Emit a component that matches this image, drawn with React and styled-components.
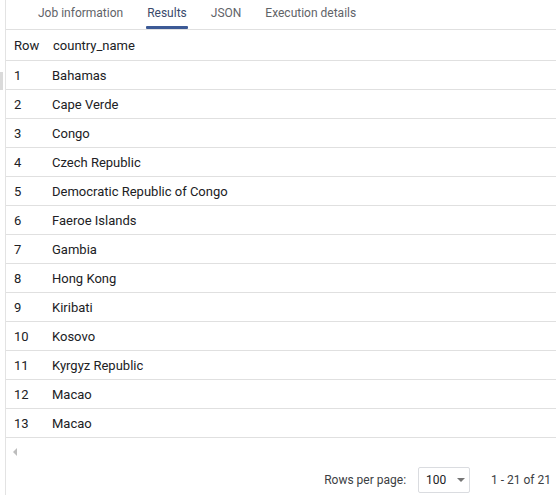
import React from "react";
import styled, { createGlobalStyle } from "styled-components";

const Global = createGlobalStyle`
  html, body { margin: 0; padding: 0; background: #fff; }
  body { font-family: Roboto, "Noto Sans", Arial, sans-serif; color: #202124; }
`;

const Page = styled.div`
  position: relative;
  width: 556px;
  height: 495px;
  overflow: hidden;
  display: flex;
  flex-direction: column;
`;

const Frame = styled.div`
  margin-left: 5px;
  border-left: 1px solid #e3e3e3;
  display: flex;
  flex-direction: column;
  flex: 1;
`;

const ScrollThumb = styled.div`
  position: absolute;
  left: 0;
  top: 72px;
  width: 3px;
  height: 18px;
  background: #dadada;
`;

const Tabs = styled.div`
  display: flex;
  height: 29px;
  padding-left: 20px;
  border-bottom: 1px solid #e0e0e0;
`;

const Tab = styled.div`
  position: relative;
  padding: 0 12px;
  font-size: 12px;
  line-height: 26px;
  color: ${(p) => (p.$active ? "#3a4a6b" : "#5f6368")};
  &::after {
    content: "";
    display: ${(p) => (p.$active ? "block" : "none")};
    position: absolute;
    left: 11px;
    right: 11px;
    bottom: 0;
    height: 3px;
    background: #3c5a96;
    border-radius: 1px;
  }
`;

const Table = styled.div`
  display: flex;
  flex-direction: column;
`;

const Row = styled.div`
  display: grid;
  grid-template-columns: 38px 1fr;
  align-items: center;
  height: ${(p) => (p.$header ? "30px" : "28px")};
  border-bottom: 1px solid #e0e0e0;
  padding-left: 8px;
  font-size: 13px;
  color: #202124;
  font-weight: 400;
`;

const NameCell = styled.div`
  padding-left: ${(p) => (p.$header ? "1px" : "0")};
`;

const HScroll = styled.div`
  height: 28px;
  display: flex;
  align-items: center;
  padding-left: 6px;
`;

const Footer = styled.div`
  display: flex;
  align-items: center;
  justify-content: flex-end;
  height: 28px;
  padding-right: 5px;
  font-size: 12px;
  color: #3c4043;
  margin-top: auto;
  margin-bottom: 2px;
`;

const Label = styled.span`
  margin-right: 12px;
`;

const Select = styled.div`
  display: flex;
  align-items: center;
  width: 52px;
  height: 26px;
  box-sizing: border-box;
  border: 1px solid #dadce0;
  border-radius: 2px;
  padding-left: 7px;
  margin-right: 21px;
  color: #202124;
`;

const Caret = styled.span`
  margin-left: 11px;
  width: 0;
  height: 0;
  border-left: 4px solid transparent;
  border-right: 4px solid transparent;
  border-top: 4px solid #757575;
`;

const rows = [
  "Bahamas",
  "Cape Verde",
  "Congo",
  "Czech Republic",
  "Democratic Republic of Congo",
  "Faeroe Islands",
  "Gambia",
  "Hong Kong",
  "Kiribati",
  "Kosovo",
  "Kyrgyz Republic",
  "Macao",
  "Macao",
];

export default function App() {
  return (
    <Page>
      <Global />
      <ScrollThumb />
      <Frame>
        <Tabs>
          <Tab>Job information</Tab>
          <Tab $active>Results</Tab>
          <Tab>JSON</Tab>
          <Tab>Execution details</Tab>
        </Tabs>
        <Table>
          <Row $header>
            <div>Row</div>
            <NameCell $header>country_name</NameCell>
          </Row>
          {rows.map((r, i) => (
            <Row key={i}>
              <div>{i + 1}</div>
              <NameCell>{r}</NameCell>
            </Row>
          ))}
        </Table>
        <HScroll>
          <svg width="6" height="8" viewBox="0 0 6 8">
            <path d="M5 0 L1 4 L5 8 Z" fill="#bdbdbd" />
          </svg>
        </HScroll>
        <Footer>
          <Label>Rows per page:</Label>
          <Select>
            100
            <Caret />
          </Select>
          <span>1 - 21 of 21</span>
        </Footer>
      </Frame>
    </Page>
  );
}
